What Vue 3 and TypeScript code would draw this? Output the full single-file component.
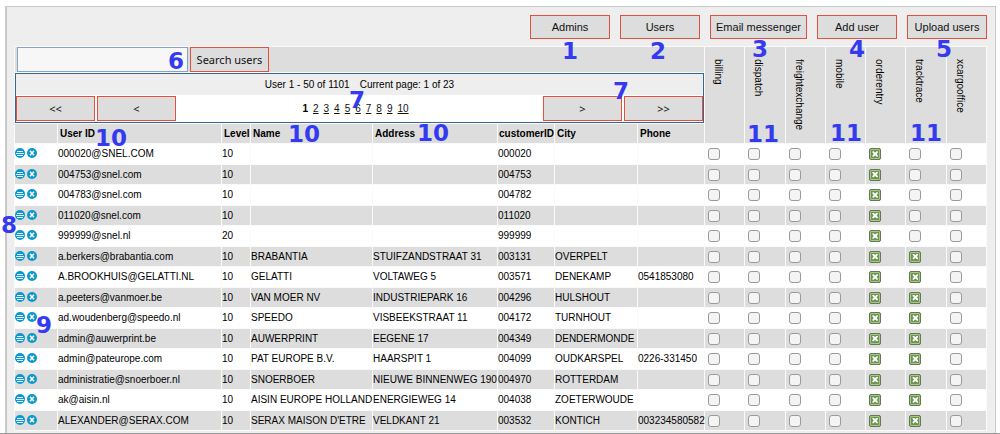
<script setup lang="ts">
import { ref } from 'vue'

interface User {
  id: string
  level: number
  name: string
  address: string
  customer: string
  city: string
  phone: string
  modules: string[]
}

interface Marker {
  label: string
  x: number
  y: number
}

const actions = ['Admins', 'Users', 'Email messenger', 'Add user', 'Upload users']
const modules = ['billing', 'dispatch', 'freightexchange', 'mobile', 'orderentry', 'tracktrace', 'xcargooffice']
const columnClasses = ['c-tools', 'c-id', 'c-level', 'c-name', 'c-address', 'c-customer', 'c-city', 'c-phone']
const headings = ['User ID', 'Level', 'Name', 'Address', 'customerID', 'City', 'Phone']
const pages = [2, 3, 4, 5, 6, 7, 8, 9, 10]
const query = ref('')

const order = ['orderentry']
const both = ['orderentry', 'tracktrace']

function user(id: string, level: number, name: string, address: string, customer: string, city: string, phone: string, enabled: string[]): User {
  return { id, level, name, address, customer, city, phone, modules: [...enabled] }
}

const users = ref<User[]>([
  user('000020@SNEL.COM', 10, '', '', '000020', '', '', order),
  user('004753@snel.com', 10, '', '', '004753', '', '', order),
  user('004783@snel.com', 10, '', '', '004782', '', '', order),
  user('011020@snel.com', 10, '', '', '011020', '', '', order),
  user('999999@snel.nl', 20, '', '', '999999', '', '', order),
  user('a.berkers@brabantia.com', 10, 'BRABANTIA', 'STUIFZANDSTRAAT 31', '003131', 'OVERPELT', '', both),
  user('A.BROOKHUIS@GELATTI.NL', 10, 'GELATTI', 'VOLTAWEG 5', '003571', 'DENEKAMP', '0541853080', both),
  user('a.peeters@vanmoer.be', 10, 'VAN MOER NV', 'INDUSTRIEPARK 16', '004296', 'HULSHOUT', '', both),
  user('ad.woudenberg@speedo.nl', 10, 'SPEEDO', 'VISBEEKSTRAAT 11', '004172', 'TURNHOUT', '', both),
  user('admin@auwerprint.be', 10, 'AUWERPRINT', 'EEGENE 17', '004349', 'DENDERMONDE', '', both),
  user('admin@pateurope.com', 10, 'PAT EUROPE B.V.', 'HAARSPIT 1', '004099', 'OUDKARSPEL', '0226-331450', both),
  user('administratie@snoerboer.nl', 10, 'SNOERBOER', 'NIEUWE BINNENWEG 190', '004970', 'ROTTERDAM', '', both),
  user('ak@aisin.nl', 10, 'AISIN EUROPE HOLLAND', 'ENERGIEWEG 14', '004038', 'ZOETERWOUDE', '', both),
  user('ALEXANDER@SERAX.COM', 10, "SERAX MAISON D'ETRE", 'VELDKANT 21', '003532', 'KONTICH', '003234580582', both),
])

const markers: Marker[] = [
  { label: '1', x: 570, y: 51 },
  { label: '2', x: 658, y: 51 },
  { label: '3', x: 760, y: 49 },
  { label: '4', x: 857, y: 49 },
  { label: '5', x: 944, y: 49 },
  { label: '6', x: 176, y: 61 },
  { label: '7', x: 357, y: 100 },
  { label: '7', x: 621, y: 91 },
  { label: '8', x: 9, y: 225 },
  { label: '9', x: 44, y: 325 },
  { label: '10', x: 111, y: 138 },
  { label: '10', x: 304, y: 134 },
  { label: '10', x: 433, y: 133 },
  { label: '11', x: 763, y: 134 },
  { label: '11', x: 846, y: 133 },
  { label: '11', x: 926, y: 133 },
]
</script>

<template>
  <div class="page">
    <main class="panel">
      <nav class="actions">
        <button v-for="a in actions" :key="a" type="button" class="btn action">{{ a }}</button>
      </nav>

      <table class="users">
        <colgroup>
          <col v-for="c in columnClasses" :key="c" :class="c" />
          <col v-for="m in modules" :key="m" />
        </colgroup>
        <thead>
          <tr>
            <td colspan="8" class="search-cell">
              <form class="search" @submit.prevent>
                <input v-model="query" type="text" class="query" aria-label="Search users" />
                <button type="submit" class="btn search-btn">Search users</button>
              </form>
            </td>
            <th v-for="m in modules" :key="m" rowspan="3" scope="col" class="module">
              <span>{{ m }}</span>
            </th>
          </tr>
          <tr>
            <td colspan="8" class="pager-cell">
              <div class="summary"><span>User 1 - 50 of 1101</span><span>Current page: 1 of 23</span></div>
              <div class="pager">
                <button type="button" class="btn step">&lt;&lt;</button>
                <button type="button" class="btn step">&lt;</button>
                <div class="pages">
                  <b>1</b>
                  <a v-for="p in pages" :key="p" href="#">{{ p }}</a>
                </div>
                <button type="button" class="btn step">&gt;</button>
                <button type="button" class="btn step">&gt;&gt;</button>
              </div>
            </td>
          </tr>
          <tr class="headings">
            <td></td>
            <th v-for="h in headings" :key="h" scope="col">{{ h }}</th>
          </tr>
        </thead>
        <tbody>
          <tr v-for="u in users" :key="u.id">
            <td>
              <div class="tools">
                <button type="button" class="tool" :aria-label="`Edit ${u.id}`">
                  <svg viewBox="0 0 10 10" width="10" height="10">
                    <circle cx="5" cy="5" r="5" fill="#0a98cc" />
                    <path d="M2 3.5h6M1 5.5h8M2 7.5h6" stroke="#e4f6fd" stroke-width="1" fill="none" />
                  </svg>
                </button>
                <button type="button" class="tool" :aria-label="`Delete ${u.id}`">
                  <svg viewBox="0 0 10 10" width="10" height="10">
                    <circle cx="5" cy="5" r="5" fill="#0a98cc" />
                    <path d="M3 2.8l4 4.4M7 2.8l-4 4.4" stroke="#fff" stroke-width="1.6" fill="none" />
                  </svg>
                </button>
              </div>
            </td>
            <td>{{ u.id }}</td>
            <td>{{ u.level }}</td>
            <td>{{ u.name }}</td>
            <td>{{ u.address }}</td>
            <td>{{ u.customer }}</td>
            <td>{{ u.city }}</td>
            <td>{{ u.phone }}</td>
            <td v-for="m in modules" :key="m">
              <input v-model="u.modules" type="checkbox" class="check" :value="m" :aria-label="`${m} for ${u.id}`" />
            </td>
          </tr>
        </tbody>
      </table>
    </main>

    <span
      v-for="(k, i) in markers"
      :key="i"
      class="marker"
      :style="{ left: `${k.x / 10}%`, top: `${k.y}px` }"
    >{{ k.label }}</span>
  </div>
</template>

<style>
body {
  background: #fff;
}
</style>

<style scoped>
.page {
  position: relative;
  overflow: hidden;
  padding: 6px 4px 0 5px;
  border-bottom: 1px solid #999;
  font: 10px/18px "Liberation Sans", Arial, sans-serif;
  color: #000;
}

.panel {
  padding: 8px 8px 2px 7px;
  border: solid #c8c8c8;
  border-width: 1px 1px 0 2px;
  background: #eee;
}

.actions {
  display: flex;
  justify-content: flex-end;
  gap: 10px;
  margin-bottom: 7px;
}

.btn {
  box-sizing: border-box;
  margin: 0;
  padding: 0;
  border: 1px solid #e4503c;
  border-radius: 0;
  background: #ddd;
  color: #111;
  font: inherit;
}

.action {
  min-width: 80px;
  height: 24px;
  padding: 0 5px;
  font-size: 11px;
}

.users {
  width: 100%;
  table-layout: fixed;
  border-collapse: separate;
  border-spacing: 1px;
  background: #fafafa;
}

.c-tools { width: 42px; }
.c-id { width: 163px; }
.c-level { width: 28px; }
.c-name { width: 121px; }
.c-address { width: 124px; }
.c-customer { width: 56px; }
.c-city { width: 82px; }
.c-phone { width: 66px; }

td,
th {
  padding: 0;
  text-align: left;
  white-space: nowrap;
  vertical-align: middle;
}

.search-cell {
  background: #ddd;
}

.search {
  display: flex;
  gap: 2px;
  padding-left: 2px;
}

.query {
  box-sizing: border-box;
  width: 171px;
  height: 25px;
  margin: 0;
  padding: 0 4px;
  border: 1px solid #86a3c0;
  border-radius: 0;
  background: #f7f7f7;
  font: inherit;
}

.search-btn {
  width: 79px;
  height: 25px;
  font-family: "Noto Sans", sans-serif;
  font-size: 11px;
}

.pager-cell {
  border: 1px solid #36659a;
  background: #fff;
}

.summary {
  display: flex;
  justify-content: center;
  gap: 10px;
  height: 21px;
  line-height: 22px;
  background: #eee;
}

.pager {
  display: flex;
  align-items: center;
  gap: 2px;
  height: 27px;
}

.step {
  width: 79px;
  height: 25px;
  font-family: "Noto Sans", sans-serif;
  font-size: 11px;
}

.pages {
  display: flex;
  flex: 1;
  justify-content: center;
  gap: 5px;
  padding-right: 8px;
}

.pages a {
  color: #111;
}

.headings td,
.headings th {
  height: 19px;
  padding-left: 2px;
  background: #ddd;
}

.headings th:nth-child(6) {
  padding-left: 1px;
}

.module {
  padding: 12px 0 0 4px;
  background: #ddd;
  font-weight: normal;
  vertical-align: top;
}

.module span {
  display: block;
  writing-mode: vertical-rl;
}

tbody td {
  height: 20px;
  background: #fff;
}

tbody tr:nth-child(even) td {
  height: 19px;
  background: #ddd;
}

.tools {
  display: flex;
  gap: 2px;
  padding-bottom: 2px;
}

.tool {
  display: flex;
  padding: 0;
  border: 0;
  background: none;
}

.check {
  appearance: none;
  display: block;
  box-sizing: border-box;
  width: 12px;
  height: 12px;
  margin: 0 0 0 3px;
  border: 1px solid #9a9a9a;
  border-radius: 3px;
  background: #f4f4f4;
}

.check:checked {
  padding: 2px;
  border-color: #66755c;
  border-radius: 2px;
  background: #6f9355;
  box-shadow: inset 0 0 0 1px #a4cc7e;
}

.check:checked::before {
  content: "";
  display: block;
  width: 6px;
  height: 6px;
  background: #fff;
  clip-path: polygon(0 17%, 17% 0, 50% 25%, 83% 0, 100% 17%, 75% 50%, 100% 83%, 83% 100%, 50% 75%, 17% 100%, 0 83%, 25% 50%);
}

.marker {
  position: absolute;
  transform: translate(-50%, -50%);
  color: #333af0;
  font: bold 23px/24px "DejaVu Sans", sans-serif;
  pointer-events: none;
}
</style>
